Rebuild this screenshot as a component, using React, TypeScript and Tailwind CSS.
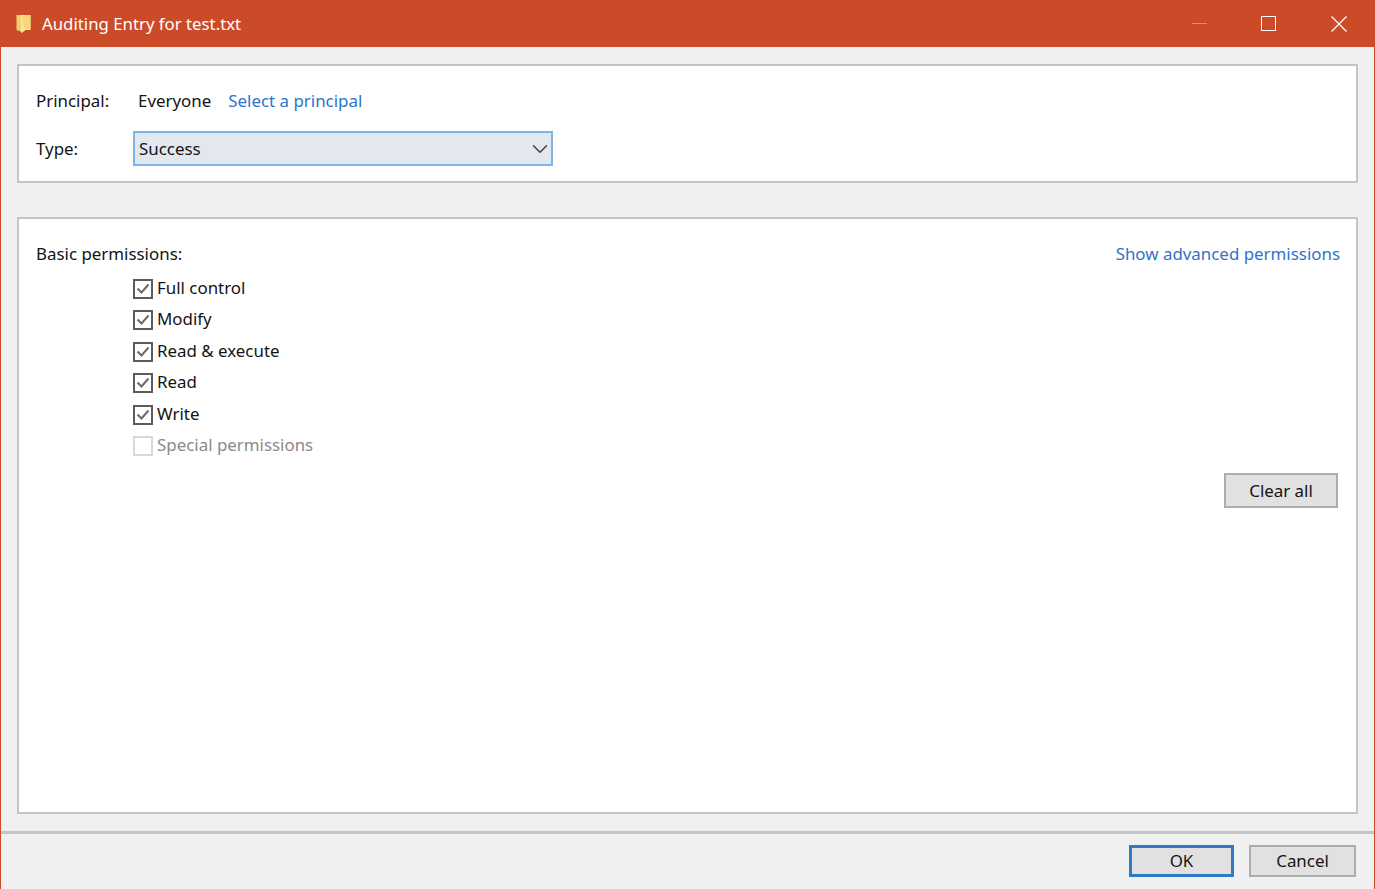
import { ChevronDown } from 'lucide-react';

const FONT = "font-['Noto_Sans','Open_Sans',sans-serif]";

const permissions = ['Full control', 'Modify', 'Read & execute', 'Read', 'Write'];

const FolderIcon = () => (
  <svg width="15" height="20" viewBox="0 0 15 20" className="shrink-0">
    <path d="M0.5 1 H6 V18 L0.5 16 Z" fill="#f3cf74" />
    <path d="M5 1 H14.5 V16 H9 L5 19 Z" fill="#fce8a4" />
    <path d="M5 3 L9 1 H14.5 V15 H9 Z" fill="#f9d776" />
    <path d="M5 2 L9 16 V16.5 L5.5 19 Z" fill="#f6e2a0" />
  </svg>
);

const Checkbox = ({ checked, disabled }: { checked?: boolean; disabled?: boolean }) => (
  <span
    className={`flex h-5 w-5 shrink-0 items-center justify-center border-2 bg-white ${
      disabled ? 'border-[#d8d8d8]' : 'border-[#5c5c5c]'
    }`}
  >
    {checked && (
      <svg width="16" height="16" viewBox="0 0 16 16" fill="none">
        <path d="M2.5 7.5 L6.5 11.5 L13.5 3.5" stroke="#6a6a6a" strokeWidth="2" />
      </svg>
    )}
  </span>
);

const PermissionRow = ({ label, disabled }: { label: string; disabled?: boolean }) => (
  <div className="flex h-[31.5px] items-center gap-1">
    <Checkbox checked={!disabled} disabled={disabled} />
    <span className={`-translate-y-px ${disabled ? 'text-[#8a8a8a]' : ''}`}>{label}</span>
  </div>
);

export default function App() {
  return (
    <div className={`flex h-[889px] w-[1375px] flex-col overflow-hidden border-x border-[#cb4a27] bg-[#f0f0f0] text-[16.9px] leading-6 text-[#141414] ${FONT}`}>
      <div className="-mx-px flex h-[47px] shrink-0 items-center bg-[#cb4a27] text-white">
        <div className="ml-[16px] mr-[11px] flex">
          <FolderIcon />
        </div>
        <span className="mt-px text-[16.8px]">Auditing Entry for test.txt</span>
        <div className="ml-auto flex items-center">
          <span className="mr-[54px] h-px w-[15px] bg-[#e88a70]" />
          <span className="mr-[55px] h-[15px] w-[15px] border-[1.5px] border-white" />
          <svg width="16" height="16" viewBox="0 0 16 16" className="mr-[28px]" fill="none">
            <path d="M0.5 0.5 L15.5 15.5 M15.5 0.5 L0.5 15.5" stroke="white" strokeWidth="1.3" />
          </svg>
        </div>
      </div>

      <div className="flex min-h-0 flex-1 flex-col gap-[34px] px-4 pt-[17px]">
        <section className="h-[119px] shrink-0 border-2 border-[#c4c4c4] bg-white pl-[17px] pr-4 pt-[23px]">
          <div className="flex h-[24px] items-center">
            <span className="w-[102px]">Principal:</span>
            <span>Everyone</span>
            <span className="ml-[17px] text-[#2f74c8]">Select a principal</span>
          </div>
          <div className="mt-[18px] flex h-[35px] items-center">
            <span className="w-[97px]">Type:</span>
            <div className="flex h-[35px] w-[420px] items-center justify-between border-2 border-[#7eb4ea] bg-[#e2e8ee] pl-1">
              <span>Success</span>
              <ChevronDown size={26} strokeWidth={1.4} className="-mr-[2px] text-[#444444]" />
            </div>
          </div>
        </section>

        <section className="flex h-[597px] shrink-0 flex-col border-2 border-[#c4c4c4] bg-white pl-[17px] pr-4 pt-[23px]">
          <div className="flex h-[24px] items-center justify-between">
            <span>Basic permissions:</span>
            <span className="text-[#2f74c8]">Show advanced permissions</span>
          </div>
          <div className="mt-[7px] flex items-start justify-between pl-[97px]">
            <div className="flex flex-col">
              {permissions.map((p) => (
                <PermissionRow key={p} label={p} />
              ))}
              <PermissionRow label="Special permissions" disabled />
            </div>
            <button className="mr-[2px] mt-[200px] h-[35px] w-[114px] border-2 border-[#adadad] bg-[#e1e1e1]">
              Clear all
            </button>
          </div>
        </section>
      </div>

      <div className="flex h-[58px] shrink-0 items-start justify-end gap-[15px] border-t-[3px] border-[#c4c4c4] pr-[18px] pt-[11px]">
        <button className="h-[32px] w-[105px] border-[3px] border-[#2f7ac4] bg-[#e1e1e1]">OK</button>
        <button className="h-[32px] w-[107px] border-2 border-[#adadad] bg-[#e1e1e1]">Cancel</button>
      </div>
    </div>
  );
}
